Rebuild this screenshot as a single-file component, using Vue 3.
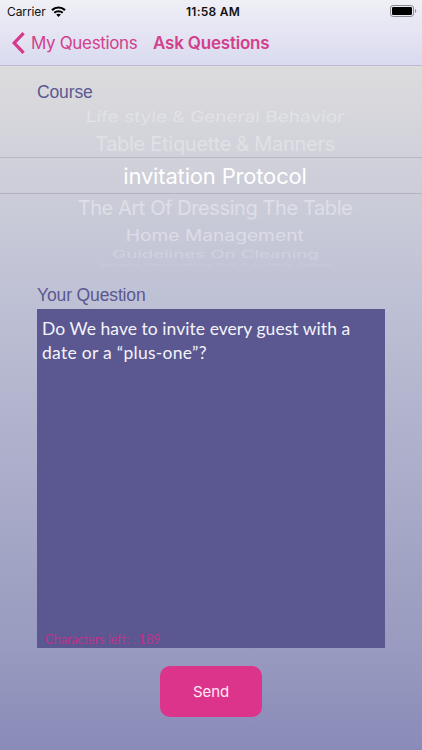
<script setup>
import { ref } from 'vue'

const courses = [
  { name: 'Life style & General Behavior', cls: 'up2' },
  { name: 'Table Etiquette & Manners', cls: 'up1' },
  { name: 'invitation Protocol', cls: 'selected' },
  { name: 'The Art Of Dressing The Table', cls: 'down1' },
  { name: 'Home Management', cls: 'down2' },
  { name: 'Guidelines On Cleaning', cls: 'down3' },
  { name: 'Simple Decorating For A Lovely Table', cls: 'down4' },
]
const lines = ref(['Do We have to invite every guest with a', 'date or a “plus-one”?'])
const left = ref(189)
</script>

<template>
  <div class="screen">
    <header class="top">
      <div class="status">
        <div class="carrier">
          <span class="carrier-name">Carrier</span>
          <svg class="wifi" width="15" height="11" viewBox="0 0 15 11">
            <path d="M1 4.1C4.7.6 10.3.6 14 4.1" fill="none" stroke="#000" stroke-width="2.2" />
            <path d="M3.3 6.8c2.3-2.1 6.1-2.1 8.4 0" fill="none" stroke="#000" stroke-width="2" />
            <path d="M5.2 8.6c1.3-1.1 3.3-1.1 4.6 0L7.5 10.9z" fill="#000" />
          </svg>
        </div>
        <span class="time">11:58 AM</span>
        <div class="power">
          <svg width="27" height="12" viewBox="0 0 27 12">
            <rect x=".5" y=".5" width="23" height="11" rx="2.6" fill="none" stroke="#8b8a94" />
            <rect x="2" y="2" width="20" height="8" rx="1.2" fill="#000" />
            <path d="M25 4v4c1.7-.6 1.7-3.4 0-4z" fill="#8b8a94" />
          </svg>
        </div>
      </div>
      <nav class="nav">
        <svg class="chevron" width="14" height="22" viewBox="0 0 14 22">
          <path d="M12.6 1.2 3.2 11l9.4 9.8" fill="none" stroke="#d6388b" stroke-width="3.2" />
        </svg>
        <span class="back">My Questions</span>
        <h1 class="title">Ask Questions</h1>
      </nav>
    </header>
    <main class="content">
      <h2 class="label course">Course</h2>
      <div class="picker">
        <div v-for="c in courses" :key="c.name" class="row" :class="c.cls">
          <span>{{ c.name }}</span>
        </div>
      </div>
      <h2 class="label question">Your Question</h2>
      <section class="box">
        <p class="text">
          <span v-for="(l, i) in lines" :key="i" :class="'line' + i">{{ l }}</span>
        </p>
        <p class="count">Characters left: <i>:</i> {{ left }}</p>
      </section>
      <button class="send">Send</button>
    </main>
  </div>
</template>

<style>
body { margin: 0; }
</style>

<style scoped>
.screen {
  width: 422px;
  height: 750px;
  overflow: hidden;
  display: flex;
  flex-direction: column;
  background: linear-gradient(#dcdcdf 0, #dcdcde 66px, #bdbfd4 310px, #989abf 650px, #898bb9 750px);
  font-family: Inter, Roboto, sans-serif;
}
.top {
  box-sizing: border-box;
  height: 66px;
  background: linear-gradient(#efeff6, #dadaf0);
  border-bottom: 1px solid #bdbad4;
}
.status {
  height: 22px;
  display: grid;
  grid-template-columns: 1fr auto 1fr;
  align-items: center;
  padding: 0 5px 0 7px;
  color: #111;
}
.carrier { display: flex; align-items: center; gap: 5px; }
.carrier-name { font-size: 12px; letter-spacing: -.1px; }
.wifi { display: block; }
.time { margin-left: 2px; font-size: 12px; font-weight: 600; letter-spacing: .25px; }
.power { display: flex; justify-content: flex-end; }
.power svg { display: block; }
.nav {
  height: 42px;
  display: flex;
  align-items: center;
  padding-left: 11px;
  color: #d2408c;
}
.chevron { flex: none; margin-right: 6px; }
.back { width: 122px; font-size: 17px; white-space: nowrap; letter-spacing: -.35px; }
.title { margin: 0; font-size: 17px; font-weight: 600; letter-spacing: -.2px; white-space: nowrap; }
.content { display: flex; flex-direction: column; align-items: stretch; }
.label {
  margin: 0 37px;
  font: 400 17.5px/22px "Liberation Sans", Arial, sans-serif;
  letter-spacing: -.13px;
  color: #5b5891;
}
.course { margin-top: 15px; }
.picker { height: 169px; margin-top: 1px; display: flex; flex-direction: column; }
.row {
  box-sizing: border-box;
  flex: none;
  display: flex;
  align-items: center;
  justify-content: center;
  padding-left: 8px;
  white-space: nowrap;
  color: #fff;
  font-size: 20px;
}
.row span { display: block; line-height: 1; }
.up2 { height: 26px; opacity: .3; }
.up2 span { transform: scale(.95, .76) skewX(-3deg); }
.up1 { height: 27px; opacity: .31; letter-spacing: -.28px; }
.selected {
  height: 37px;
  font-size: 22px;
  letter-spacing: -.17px;
  border-top: 1px solid #b8b8c7;
  border-bottom: 1px solid #b3b3c4;
}
.down1 { height: 28px; opacity: .38; letter-spacing: -.41px; }
.down2 { height: 26px; opacity: .38; }
.down2 span { transform: translateY(.5px) scale(.96, .76); }
.down3 { height: 14px; opacity: .22; }
.down3 span { transform: translateY(-.5px) scale(.935, .5); }
.down4 { height: 5px; opacity: .12; }
.down4 span { transform: scale(.66, .16); }
.question { margin-top: 11px; }
.box {
  box-sizing: border-box;
  width: 348px;
  height: 338.5px;
  margin: 3.3px 37px 0;
  padding: 8px 5px 1px;
  display: flex;
  flex-direction: column;
  justify-content: space-between;
  background: #5b5891;
  font-family: Lato, "Open Sans", sans-serif;
}
.text { margin: 0; display: flex; flex-direction: column; font-size: 17.5px; line-height: 24px; color: #f4f3fb; white-space: nowrap; }
.line0 { letter-spacing: .05px; }
.line1 { letter-spacing: .28px; }
.count { margin: 0 0 0 3px; font-size: 13px; line-height: 16px; letter-spacing: -.2px; color: #bc3489; }
.count i { font-style: normal; opacity: .45; }
.send {
  align-self: center;
  width: 102px;
  height: 51px;
  margin-top: 18.2px;
  padding: 0;
  border: 0;
  border-radius: 10px;
  background: #dd348b;
  color: #fde9f3;
  font: 400 15px Inter, sans-serif;
  letter-spacing: -.1px;
}
</style>
